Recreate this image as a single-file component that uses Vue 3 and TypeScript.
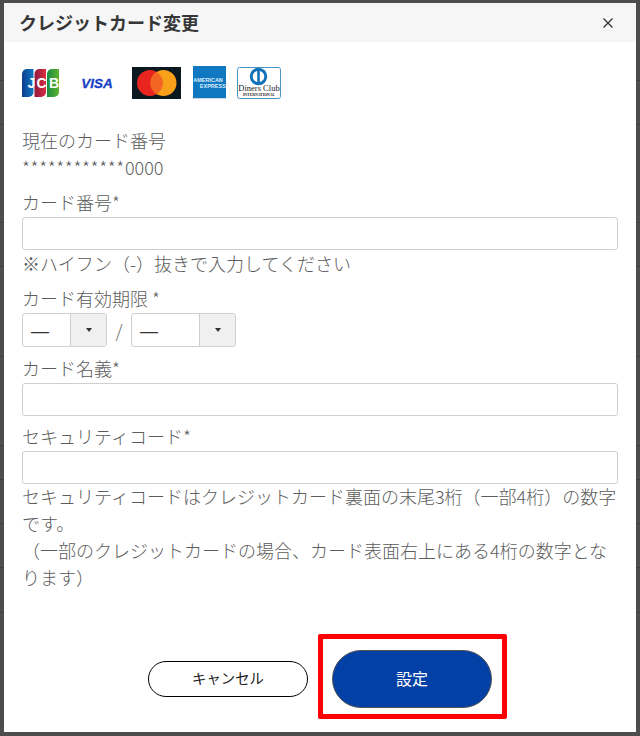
<script setup lang="ts">
import { ref } from 'vue'

const cardNumber = ref('')
const cardName = ref('')
const securityCode = ref('')
const months = ['—', '01', '02', '03', '04', '05', '06', '07', '08', '09', '10', '11', '12']
const years = ['—', '25', '26', '27', '28', '29', '30']
const month = ref('—')
const year = ref('—')

// table rows of the page under the overlay, only their rules show at the edges
const rowHeights = [81, 44, 98, 44, 90, 89, 34, 44, 44, 45]
</script>

<template>
  <div class="backdrop">
    <div class="page-behind">
      <div v-for="(h, i) in rowHeights" :key="i" class="page-row" :style="{ height: h + 'px' }" />
    </div>
    <div class="modal">
      <header class="modal-head">
        <h2>クレジットカード変更</h2>
        <button class="close" aria-label="閉じる">
          <svg width="10" height="10" viewBox="0 0 10 10"><path d="M.5.5l9 9M9.500.5l-9 9" stroke="#333" stroke-width="1.300" fill="none" /></svg>
        </button>
      </header>

      <div class="modal-body">
        <div class="brands">
          <svg class="jcb" width="37" height="28" viewBox="0 0 37 28">
            <defs>
              <linearGradient id="jcb-b" x1="0" x2="1" y1="0" y2="0"><stop offset="0" stop-color="#0a3f8f" /><stop offset="1" stop-color="#1275c0" /></linearGradient>
              <linearGradient id="jcb-r" x1="0" x2="1" y1="0" y2="0"><stop offset="0" stop-color="#8e1a3c" /><stop offset="1" stop-color="#dc2c42" /></linearGradient>
              <linearGradient id="jcb-g" x1="0" x2="1" y1="0" y2="0"><stop offset="0" stop-color="#1b8a3e" /><stop offset="1" stop-color="#5cb531" /></linearGradient>
            </defs>
            <path d="M0 5a5 5 0 0 1 5-5h6.500v23a5 5 0 0 1-5 5H0z" fill="url(#jcb-b)" />
            <path d="M12.500 5a5 5 0 0 1 5-5H24v23a5 5 0 0 1-5 5h-6.500z" fill="url(#jcb-r)" />
            <path d="M25 5a5 5 0 0 1 5-5h7v23a5 5 0 0 1-5 5h-7z" fill="url(#jcb-g)" />
            <text x="5.500" y="19" class="jcb-text">J</text>
            <text x="14.500" y="19" class="jcb-text">C</text>
            <text x="27" y="19" class="jcb-text">B</text>
          </svg>
          <svg class="visa" width="34" height="13" viewBox="0 0 34 13">
            <text x="17" y="12" text-anchor="middle" class="visa-text">VISA</text>
          </svg>
          <svg class="master" width="49" height="32" viewBox="0 0 49 32">
            <rect width="49" height="32" fill="#0c1820" />
            <circle cx="18" cy="16" r="13" fill="#e8251f" />
            <circle cx="31.500" cy="16" r="13" fill="#f9a01b" />
            <path d="M24.750 4.900A13 13 0 0 1 24.750 27.100A13 13 0 0 1 24.750 4.900z" fill="#f26522" />
          </svg>
          <svg class="amex" width="34" height="33" viewBox="0 0 34 33">
            <rect width="33" height="32" x="1" fill="#0f78c0" />
            <rect x="0" y="32" width="34" height="1" fill="#cfd8de" />
            <text x="1.200" y="16" class="amex-text">AMERICAN</text>
            <text x="33.800" y="22" text-anchor="end" class="amex-text">EXPRESS</text>
          </svg>
          <svg class="diners" width="44" height="32" viewBox="0 0 44 32">
            <rect x=".5" y=".5" width="43" height="31" rx="2" fill="#fff" stroke="#4a94c8" />
            <circle cx="21.500" cy="9.500" r="8.700" fill="#1272b8" />
            <circle cx="21.500" cy="9.500" r="5.800" fill="#fff" />
            <rect x="20.200" y="3" width="2.600" height="13" fill="#1272b8" />
            <text x="22" y="24" text-anchor="middle" class="diners-name">Diners Club</text>
            <text x="22" y="28.500" text-anchor="middle" class="diners-sub">INTERNATIONAL</text>
          </svg>
        </div>

        <p class="line first">現在のカード番号</p>
        <p class="line"><span class="stars">************</span>0000</p>

        <label class="line label">カード番号*</label>
        <input v-model="cardNumber" class="field" type="text" />
        <p class="line">※ハイフン（-）抜きで入力してください</p>

        <label class="line label">カード有効期限 *</label>
        <div class="expiry">
          <div class="select month">
            <span class="select-value">{{ month }}</span>
            <span class="select-arrow"><i /></span>
            <select v-model="month" class="native"><option v-for="m in months" :key="m">{{ m }}</option></select>
          </div>
          <span class="slash">/</span>
          <div class="select year">
            <span class="select-value">{{ year }}</span>
            <span class="select-arrow"><i /></span>
            <select v-model="year" class="native"><option v-for="y in years" :key="y">{{ y }}</option></select>
          </div>
        </div>

        <label class="line label name-label">カード名義*</label>
        <input v-model="cardName" class="field" type="text" />

        <label class="line label code-label">セキュリティコード*</label>
        <input v-model="securityCode" class="field" type="text" />
        <p class="note">セキュリティコードはクレジットカード裏面の末尾3桁（一部4桁）の数字です。<br />（一部のクレジットカードの場合、カード表面右上にある4桁の数字となります）</p>
      </div>

      <footer class="modal-foot">
        <button class="btn cancel">キャンセル</button>
        <div class="highlight">
          <button class="btn submit">設定</button>
        </div>
      </footer>
    </div>
  </div>
</template>

<style>
html, body { margin: 0; background: #4d4d4d; }
</style>

<style scoped>
.backdrop {
  position: relative;
  width: 640px;
  height: 736px;
  box-sizing: border-box;
  padding: 3px 4px 4px;
  background: #4d4d4d;
  font-family: "Noto Sans CJK JP", "Noto Sans", sans-serif;
  font-weight: 300;
  color: #5c5c5c;
  overflow: hidden;
}

.page-behind {
  position: absolute;
  inset: 0;
}
.page-row {
  box-sizing: border-box;
  border-bottom: 1px solid #3d3d3d;
}

.modal {
  position: relative;
  height: 729px;
  background: #fff;
  display: flex;
  flex-direction: column;
}

.modal-head {
  height: 39px;
  flex: none;
  background: #f6f6f6;
  display: flex;
  align-items: center;
  justify-content: space-between;
  padding: 0 23px 0 15px;
}

.modal-head h2 {
  margin: 0 0 2px;
  font-size: 18px;
  font-weight: 700;
  color: #363636;
  line-height: 1;
}

.close {
  border: 0;
  background: none;
  padding: 0;
  display: flex;
}

.modal-body {
  flex: 1;
  padding: 0 18px;
}

.brands {
  display: flex;
  align-items: center;
  height: 33px;
  margin-top: 24px;
}
.visa { margin-left: 21px; overflow: visible; }
.master { margin-left: 18px; }
.amex { margin-left: 11px; }
.diners { margin-left: 11px; }
.jcb-text {
  font: 700 14px "Liberation Sans", sans-serif;
  fill: #fff;
}
.visa-text {
  font: italic 700 13.500px "Liberation Sans", sans-serif;
  fill: #1a3fc4;
  stroke: #1a3fc4;
  stroke-width: .3;
}
.amex-text {
  font: 700 5.500px "Liberation Sans", sans-serif;
  fill: #dcefff;
}
.diners-name {
  font: 8.500px "Liberation Serif", serif;
  fill: #222;
}
.diners-sub {
  font: 700 3.800px "Liberation Serif", serif;
  fill: #222;
}

.line {
  display: block;
  margin: 0;
  font-size: 18px;
  line-height: 27px;
}
.stars { letter-spacing: .6px; }
.first { margin-top: 28px; }
.label { margin-top: 8px; margin-bottom: 1px; }
.code-label { margin-top: 7px; }

.field {
  display: block;
  width: 100%;
  height: 33px;
  box-sizing: border-box;
  border: 1px solid #cfcfcf;
  border-radius: 3px;
  background: #fff;
  outline: none;
}

.expiry {
  display: flex;
  align-items: center;
  height: 34px;
}
.select {
  position: relative;
  height: 34px;
  box-sizing: border-box;
  border: 1px solid #cfcfcf;
  border-radius: 3px;
  display: flex;
  overflow: hidden;
}
.month { width: 85px; }
.year { width: 105px; }
.select-value {
  flex: 1;
  padding-left: 8px;
  font-family: "Liberation Sans", sans-serif;
  font-size: 18px;
  line-height: 35px;
  color: #333;
}
.select-arrow {
  width: 35px;
  background: #f0f0f0;
  border-left: 1px solid #cfcfcf;
  display: flex;
  align-items: center;
  justify-content: center;
}
.select-arrow i {
  border-left: 3.500px solid transparent;
  border-right: 3.500px solid transparent;
  border-top: 4px solid #333;
}
.native {
  position: absolute;
  inset: 0;
  opacity: 0;
}
.slash {
  width: 24px;
  text-align: center;
  font-size: 18px;
  color: #666;
}

.note {
  margin: -1px 0 0;
  font-size: 18px;
  line-height: 27px;
}

.modal-foot {
  flex: none;
  position: relative;
  height: 99px;
  display: flex;
  align-items: flex-start;
  padding: 28px 0 0 144px;
  box-sizing: border-box;
}

.btn {
  font-family: inherit;
  cursor: pointer;
  border-radius: 999px;
  width: 160px;
  padding: 0 0 3px;
}
.cancel {
  height: 36px;
  background: #fff;
  border: 1px solid #000;
  color: #222;
  font-size: 14.400px;
}
.highlight {
  position: absolute;
  left: 314px;
  top: 1px;
  width: 189px;
  height: 85px;
  box-sizing: border-box;
  border: 5px solid #f00;
  border-radius: 2px;
  padding: 11px 0 0 9px;
}
.submit {
  height: 58px;
  background: #0340a5;
  border: 1px solid #555;
  color: #fff;
  font-size: 16px;
}
</style>
